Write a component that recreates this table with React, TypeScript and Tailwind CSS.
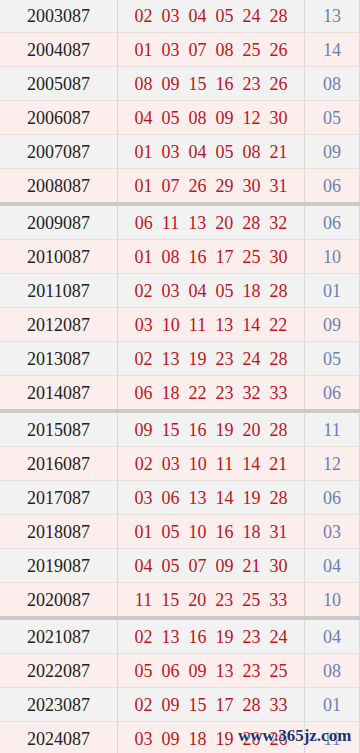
import React from "react";

type Row = { issue: string; nums: string[]; blue: string };

const raw: [string, string, string][] = [
  ["2003087", "02 03 04 05 24 28", "13"],
  ["2004087", "01 03 07 08 25 26", "14"],
  ["2005087", "08 09 15 16 23 26", "08"],
  ["2006087", "04 05 08 09 12 30", "05"],
  ["2007087", "01 03 04 05 08 21", "09"],
  ["2008087", "01 07 26 29 30 31", "06"],
  ["2009087", "06 11 13 20 28 32", "06"],
  ["2010087", "01 08 16 17 25 30", "10"],
  ["2011087", "02 03 04 05 18 28", "01"],
  ["2012087", "03 10 11 13 14 22", "09"],
  ["2013087", "02 13 19 23 24 28", "05"],
  ["2014087", "06 18 22 23 32 33", "06"],
  ["2015087", "09 15 16 19 20 28", "11"],
  ["2016087", "02 03 10 11 14 21", "12"],
  ["2017087", "03 06 13 14 19 28", "06"],
  ["2018087", "01 05 10 16 18 31", "03"],
  ["2019087", "04 05 07 09 21 30", "04"],
  ["2020087", "11 15 20 23 25 33", "10"],
  ["2021087", "02 13 16 19 23 24", "04"],
  ["2022087", "05 06 09 13 23 25", "08"],
  ["2023087", "02 09 15 17 28 33", "01"],
  ["2024087", "03 09 18 19 20 26", "11"],
];

const rows: Row[] = raw.map(([issue, n, blue]) => ({ issue, nums: n.split(" "), blue }));

const App = () => {
  return (
    <div
      className="relative w-[360px] h-[753px] overflow-hidden bg-white"
      style={{ fontFamily: '"Liberation Serif", "DejaVu Serif", serif' }}
    >
      <div className="-mt-px flex flex-col">
        {rows.map((r, i) => {
          const endOfGroup = i % 6 === 5;
          const pink = i % 2 === 1;
          return (
            <div
              key={r.issue}
              className={
                "flex h-[34px] text-[18px] leading-none " +
                (pink ? "bg-[#fdeeee] " : "bg-[#f2f2f2] ") +
                (endOfGroup ? "h-[37px] border-b-4 border-[#c9c9c9]" : "border-b border-[#e6dcdc]")
              }
            >
              <div className="w-[118px] flex items-center justify-center border-r border-[#ddd6d6] text-[#222222]">
                {r.issue}
              </div>
              <div className="w-[187px] flex items-center justify-center gap-[9px] border-r border-[#ddd6d6] text-[#c0141a]">
                {r.nums.map((n, k) => (
                  <span key={k}>{n}</span>
                ))}
              </div>
              <div className="flex-1 flex items-center justify-center text-[#6b80b0] border-r border-[#ddd6d6]">
                {r.blue}
              </div>
            </div>
          );
        })}
      </div>
      <div
        className="absolute left-[238px] top-[727px] text-[17px] font-bold text-[#1c336b] leading-none"
        style={{ textShadow: "0 0 2px #ffffff, 0 0 2px #ffffff" }}
      >
        www.365jz.com
      </div>
    </div>
  );
};

export default App;
